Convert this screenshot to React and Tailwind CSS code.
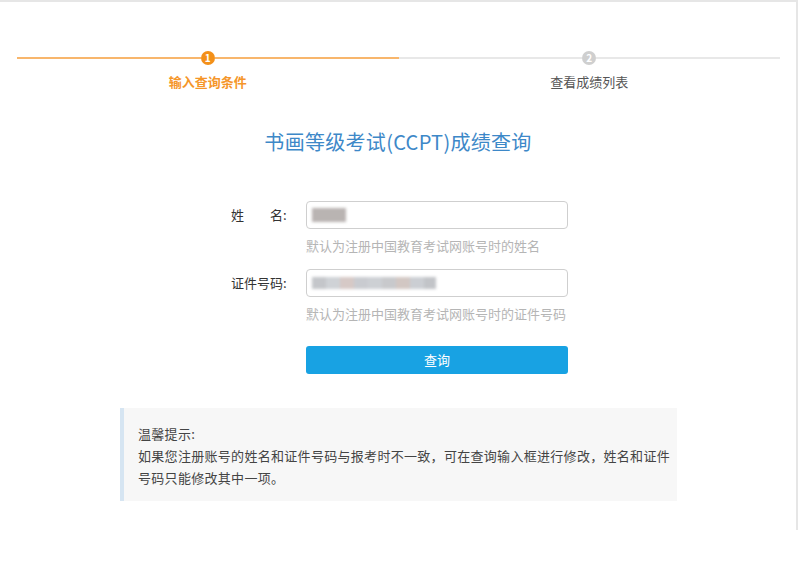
export default function App() {
  const font = { fontFamily: '"Noto Sans CJK SC", "Noto Sans", sans-serif' };
  return (
    <div className="w-[800px] h-[585px] bg-white" style={font}>
      <div className="w-[798px] h-[530px] border-t-2 border-r-2 border-[#e6e6e6] flex flex-col">
        {/* steps */}
        <div className="flex pl-[17px] pr-[16px] pt-[49px]">
          <div className="flex-1 flex flex-col items-center">
            <div className="w-full flex items-center">
              <div className="flex-1 h-[2px] bg-[#f8b66c]" />
              <div className="w-[14px] h-[14px] rounded-full bg-[#f39019] text-white text-[10px] font-bold leading-[14px] text-center">1</div>
              <div className="flex-1 h-[2px] bg-[#f8b66c]" />
            </div>
            <div className="mt-[8px] text-[13px] leading-[18px] font-bold text-[#f5962a]">输入查询条件</div>
          </div>
          <div className="flex-1 flex flex-col items-center">
            <div className="w-full flex items-center">
              <div className="flex-1 h-[2px] bg-[#e8e8e8]" />
              <div className="w-[14px] h-[14px] rounded-full bg-[#cfcfcf] text-white text-[10px] font-bold leading-[14px] text-center">2</div>
              <div className="flex-1 h-[2px] bg-[#e8e8e8]" />
            </div>
            <div className="mt-[8px] text-[13px] leading-[18px] text-[#555]">查看成绩列表</div>
          </div>
        </div>

        {/* title */}
        <div className="mt-[37px] text-center text-[20px] leading-[28px] tracking-[0.3px] text-[#3d88c8]">书画等级考试(CCPT)成绩查询</div>

        {/* form */}
        <div className="mt-[45px] flex flex-col pl-[231px]">
          <div className="flex items-center">
            <div className="w-[59px] flex text-[13px] text-[#333]">
              <span>姓</span>
              <span className="ml-[26px]">名:</span>
            </div>
            <div className="ml-[16px] w-[262px] h-[28px] rounded-[4px] border border-[#cfcfcf] flex items-center pl-[5px]">
              <div className="w-[34px] h-[14px] bg-[#b9b4b2] blur-[1.5px]" />
            </div>
          </div>
          <div className="ml-[75px] mt-[8px] text-[13px] leading-[18px] text-[#b5b5b5]">默认为注册中国教育考试网账号时的姓名</div>

          <div className="flex items-center mt-[14px]">
            <div className="w-[59px] text-[13px] text-[#333]">证件号码:</div>
            <div className="ml-[16px] w-[262px] h-[28px] rounded-[4px] border border-[#cfcfcf] flex items-center pl-[5px]">
              <div className="flex h-[12px] blur-[1.5px]">
                <div className="w-[14px] bg-[#c4c6ca]" />
                <div className="w-[14px] bg-[#cfd2d6]" />
                <div className="w-[14px] bg-[#d6c9c6]" />
                <div className="w-[14px] bg-[#c9cbd0]" />
                <div className="w-[14px] bg-[#cdd0d4]" />
                <div className="w-[14px] bg-[#c8c9cc]" />
                <div className="w-[14px] bg-[#d2c7c3]" />
                <div className="w-[14px] bg-[#cbced3]" />
                <div className="w-[12px] bg-[#c2c4c8]" />
              </div>
            </div>
          </div>
          <div className="ml-[75px] mt-[8px] text-[13px] leading-[18px] text-[#b5b5b5]">默认为注册中国教育考试网账号时的证件号码</div>

          <button className="ml-[75px] mt-[23px] w-[262px] h-[28px] rounded-[3px] bg-[#18a2e3] text-white text-[13px]">查询</button>
        </div>

        {/* tip */}
        <div className="mt-[34px] ml-[120px] w-[557px] bg-[#f7f7f7] border-l-4 border-[#d6e5f2] pl-[14px] pr-[6px] pt-[15px] pb-[12px] text-[13px] leading-[22px] text-[#444] tracking-[0.3px]">
          <div>温馨提示:</div>
          <div>如果您注册账号的姓名和证件号码与报考时不一致，可在查询输入框进行修改，姓名和证件号码只能修改其中一项。</div>
        </div>
      </div>
    </div>
  );
}
